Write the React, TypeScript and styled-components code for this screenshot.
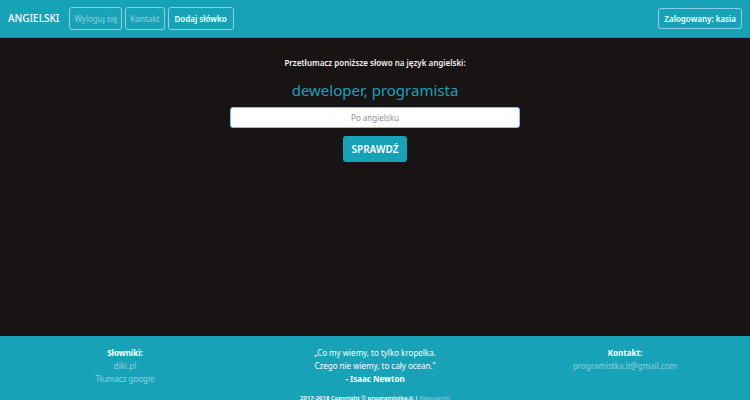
import React from "react";
import styled, { createGlobalStyle, css } from "styled-components";

const teal = "#17a2b8";
const muted = "rgba(255, 255, 255, 0.5)";

const GlobalStyle = createGlobalStyle`
  *, *::before, *::after { box-sizing: border-box; }
  body {
    margin: 0;
    overflow: hidden;
    background: #191414;
    color: #fff;
    font: 400 8px/13px "Noto Sans", "Open Sans", sans-serif;
  }
`;

const Page = styled.div`
  height: 100vh;
  display: flex;
  flex-direction: column;
`;

const Navbar = styled.nav`
  flex: none;
  display: flex;
  align-items: center;
  gap: 10px;
  padding: 7px 8px;
  background: ${teal};
  border-bottom: 1px solid #158fa2;
`;

const Brand = styled.a`
  color: #fff;
  font-size: 10px;
  font-weight: 500;
  text-decoration: none;
`;

const NavItems = styled.div`
  display: flex;
  gap: 3px;
  align-items: center;
  flex: 1;
`;

const outline = css`
  border: 1px solid rgba(255, 255, 255, 0.5);
  border-radius: 3px;
  line-height: 15px;
  white-space: nowrap;
`;

const NavLink = styled.a`
  ${outline}
  padding: 3px 4px;
  color: ${muted};
  text-decoration: none;
`;

const NavButton = styled.button<{ $compact?: boolean }>`
  background: transparent;
  color: #fff;
  font: inherit;
  font-weight: 600;
  ${outline}
  padding: ${({ $compact }) => ($compact ? "2px 5px" : "3px 6px")};
`;

const Main = styled.main`
  flex: none;
  min-height: calc(100vh - 102px);
  padding: 18px 8px;
  text-align: center;
`;

const Form = styled.form`
  display: flex;
  flex-direction: column;
  align-items: center;
`;

const Prompt = styled.label`
  color: #f0f0f0;
  font-weight: 600;
  line-height: 14px;
`;

const Word = styled.h1`
  margin: 10px 0 6px;
  color: ${teal};
  font-size: 15px;
  font-weight: 400;
  line-height: 21px;
`;

const Answer = styled.input`
  width: 100%;
  max-width: 290px;
  height: 21px;
  padding: 2px 6px;
  border: 1px solid #80bdff;
  border-radius: 3px;
  background: #fff;
  color: #495057;
  font: inherit;
  text-align: center;
  outline: none;
  &::placeholder { color: #8e959b; opacity: 1; }
`;

const Submit = styled.button`
  margin-top: 8px;
  padding: 5px 9px;
  border: 0;
  border-radius: 3px;
  background: ${teal};
  color: #fff;
  font: inherit;
  font-size: 10px;
  font-weight: 600;
  line-height: 16px;
`;

const Footer = styled.footer`
  flex: none;
  padding: 10px 0 8px;
  background: ${teal};
  text-align: center;
`;

const Columns = styled.div`
  display: grid;
  grid-template-columns: repeat(3, 1fr);
`;

const Column = styled.section`
  display: flex;
  flex-direction: column;
  align-items: center;
`;

const FooterLink = styled.a`
  color: ${muted};
  text-decoration: none;
`;

const Quote = styled.p`
  margin: 0;
`;

const Copyright = styled.p`
  margin: 8px 0 0;
  font-size: 6px;
  font-weight: 600;
  line-height: 11px;
`;

const LightLink = styled(FooterLink)`
  font-weight: 400;
`;

export default function App() {
  return (
    <Page>
      <GlobalStyle />
      <Navbar>
        <Brand href="#">ANGIELSKI</Brand>
        <NavItems>
          <NavLink href="#">Wyloguj się</NavLink>
          <NavLink href="#">Kontakt</NavLink>
          <NavButton type="button">Dodaj słówko</NavButton>
        </NavItems>
        <NavButton type="button" $compact>Zalogowany: kasia</NavButton>
      </Navbar>
      <Main>
        <Form onSubmit={(e) => e.preventDefault()}>
          <Prompt htmlFor="answer">Przetłumacz poniższe słowo na język angielski:</Prompt>
          <Word>deweloper, programista</Word>
          <Answer id="answer" type="text" placeholder="Po angielsku" />
          <Submit type="submit">SPRAWDŹ</Submit>
        </Form>
      </Main>
      <Footer>
        <Columns>
          <Column>
            <strong>Słowniki:</strong>
            <FooterLink href="#">diki.pl</FooterLink>
            <FooterLink href="#">Tłumacz google</FooterLink>
          </Column>
          <Column>
            <Quote>
              „Co my wiemy, to tylko kropelka.
              <br />
              Czego nie wiemy, to cały ocean.”
            </Quote>
            <strong>- Isaac Newton</strong>
          </Column>
          <Column>
            <strong>Kontakt:</strong>
            <FooterLink href="mailto:programistka.it@gmail.com">programistka.it@gmail.com</FooterLink>
          </Column>
        </Columns>
        <Copyright>
          2017-2018 Copyright © programistka.it | <LightLink href="#">Regulamin</LightLink>
        </Copyright>
      </Footer>
    </Page>
  );
}
